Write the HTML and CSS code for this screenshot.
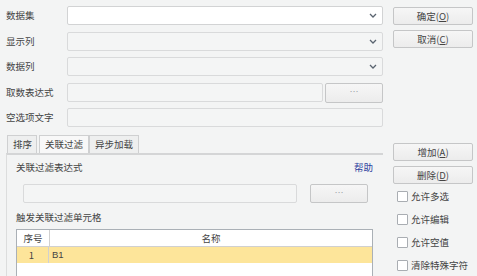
FILE: index.html
```html
<!DOCTYPE html>
<html>
<head>
<meta charset="utf-8">
<link rel="stylesheet" href="styles.css">
</head>
<body>
<div class="dialog">
  <div class="main">
    <div class="form">
      <div class="label">数据集</div>
      <div class="field select white"><span class="chev"><svg width="8" height="5" viewBox="0 0 8 5"><path d="M1 1 L4 4 L7 1" fill="none" stroke="#5a6470" stroke-width="1.3"/></svg></span></div>
      <div class="label">显示列</div>
      <div class="field select"><span class="chev"><svg width="8" height="5" viewBox="0 0 8 5"><path d="M1 1 L4 4 L7 1" fill="none" stroke="#5a6470" stroke-width="1.3"/></svg></span></div>
      <div class="label">数据列</div>
      <div class="field select"><span class="chev"><svg width="8" height="5" viewBox="0 0 8 5"><path d="M1 1 L4 4 L7 1" fill="none" stroke="#5a6470" stroke-width="1.3"/></svg></span></div>
      <div class="label">取数表达式</div>
      <div class="field-row">
        <div class="field grow"></div>
        <div class="btn dots">…</div>
      </div>
      <div class="label">空选项文字</div>
      <div class="field"></div>
    </div>

    <div class="tabs">
      <div class="tab">排序</div>
      <div class="tab active">关联过滤</div>
      <div class="tab">异步加载</div>
    </div>
    <div class="panel">
      <div class="panel-head">
        <span>关联过滤表达式</span>
        <span class="help">帮助</span>
      </div>
      <div class="expr-row">
        <div class="field expr"></div>
        <div class="btn dots small">…</div>
      </div>
      <div class="panel-label">触发关联过滤单元格</div>
      <div class="table">
        <div class="thead">
          <div class="c1">序号</div>
          <div class="c2">名称</div>
        </div>
        <div class="trow">
          <div class="c1 num">1</div>
          <div class="c2 left">B1</div>
        </div>
      </div>
    </div>
  </div>

  <div class="side">
    <div class="btn sbtn">确定(<u>O</u>)</div>
    <div class="btn sbtn">取消(<u>C</u>)</div>
    <div class="spacer"></div>
    <div class="btn sbtn">增加(<u>A</u>)</div>
    <div class="btn sbtn">删除(<u>D</u>)</div>
    <label class="check first"><span class="box"></span>允许多选</label>
    <label class="check"><span class="box"></span>允许编辑</label>
    <label class="check"><span class="box"></span>允许空值</label>
    <label class="check"><span class="box"></span>清除特殊字符</label>
  </div>
</div>
</body>
</html>
```

FILE: styles.css
```css
html, body {
  margin: 0;
  padding: 0;
  background: #f3f4f4;
}
body {
  font-family: "Noto Sans CJK SC", "Noto Sans", sans-serif;
  font-size: 9.5px;
  color: #444444;
  width: 477px;
  height: 276px;
  overflow: hidden;
}
.dialog {
  display: flex;
  padding: 6px 0 0 6px;
}
.main {
  width: 377px;
}
.form {
  display: grid;
  grid-template-columns: 61px 1fr;
  grid-auto-rows: 19px;
  row-gap: 6.5px;
  align-items: center;
}
.label {
  line-height: 19px;
}
.field {
  height: 19px;
  box-sizing: border-box;
  border: 1px solid #d9dadb;
  border-radius: 2px;
  background: #f4f5f5;
  position: relative;
}
.field.white {
  background: #ffffff;
  border-color: #d2d3d4;
}
.select .chev {
  position: absolute;
  right: 5px;
  top: 6px;
  line-height: 0;
}
.field-row {
  display: flex;
  gap: 2px;
  height: 19px;
}
.grow {
  flex: 1;
}
.btn {
  box-sizing: border-box;
  border: 1px solid #c5c6c7;
  border-radius: 2px;
  background: linear-gradient(#f6f6f6, #ececec);
  display: flex;
  align-items: center;
  justify-content: center;
  color: #444444;
}
.btn u {
  text-decoration: underline;
  text-underline-offset: 1px;
}
.dots {
  width: 58px;
  height: 20px;
  color: #9aa0a6;
  font-size: 9px;
  padding-bottom: 2px;
}
.tabs {
  display: flex;
  gap: 2px;
  margin-top: 8px;
  padding-left: 1px;
  height: 18px;
}
.tab {
  box-sizing: border-box;
  border: 1px solid #cfd0d1;
  border-bottom: none;
  background: #eeefef;
  padding: 0 5px;
  line-height: 17px;
  height: 18px;
}
.tab:first-child { width: 30px; padding: 0 0 0 5px; }
.tab.active {
  background: #f8f8f8;
  margin-right: -2px;
}
.panel {
  border-top: 2px solid #d4d5d6;
  border-left: 1px solid #dcdddd;
  height: 123px;
  box-sizing: border-box;
  padding: 4px 10px 0 9px;
  display: flex;
  flex-direction: column;
}
.panel-head {
  display: flex;
  justify-content: space-between;
  height: 16px;
  line-height: 16px;
}
.help {
  color: #2e3f9e;
}
.expr-row {
  display: flex;
  margin-top: 9px;
  padding-left: 7px;
  gap: 13px;
}
.expr {
  width: 274px;
}
.dots.small {
  width: 58px;
  height: 19px;
}
.panel-label {
  margin-top: 6px;
  line-height: 16px;
}
.table {
  margin-top: 4px;
  flex: 1;
  border: 1px solid #aab0b6;
  border-bottom: none;
  background: #ffffff;
  box-sizing: border-box;
}
.thead, .trow {
  display: flex;
  height: 16px;
  line-height: 16px;
}
.thead {
  border-bottom: 1px solid #d0d0d0;
}
.c1 {
  width: 32px;
  border-right: 1px solid #d0d0d0;
  text-align: center;
}
.c2 {
  flex: 1;
  text-align: center;
}
.trow {
  background: #fde59a;
}
.num {
  text-align: right;
  padding-right: 14px;
  box-sizing: border-box;
  width: 32px;
}
.left {
  text-align: left;
  padding-left: 3px;
  font-family: "Liberation Sans", sans-serif;
}
.side {
  margin-left: 10px;
  width: 80px;
  display: flex;
  flex-direction: column;
  gap: 5px;
  padding-top: 1px;
}
.sbtn {
  height: 18px;
  flex: none;
}
.spacer {
  height: 85px;
  flex: none;
}
.check {
  display: flex;
  align-items: center;
  gap: 3px;
  height: 18px;
  flex: none;
  margin-left: 4px;
}
.check.first {
  margin-top: -2px;
}
.box {
  width: 9px;
  height: 9px;
  border: 1px solid #a9adb2;
  background: #ffffff;
  border-radius: 1px;
}
```
